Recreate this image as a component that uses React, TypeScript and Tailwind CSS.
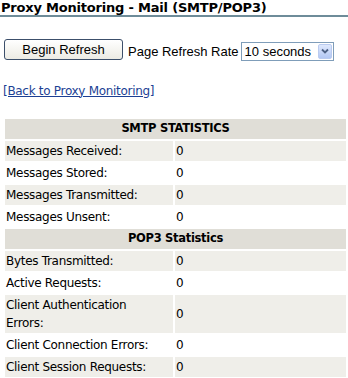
import React from 'react';

const smtpRows = [
  ['Messages Received:', '0'],
  ['Messages Stored:', '0'],
  ['Messages Transmitted:', '0'],
  ['Messages Unsent:', '0'],
];

const pop3Rows = [
  ['Bytes Transmitted:', '0'],
  ['Active Requests:', '0'],
  ['Client Authentication Errors:', '0'],
  ['Client Connection Errors:', '0'],
  ['Client Session Requests:', '0'],
];

function Section({ title, rows }: { title: string; rows: string[][] }) {
  return (
    <>
      <tr>
        <th colSpan={2} className="bg-[#e0ded7] h-[20px] p-0 text-center font-bold text-[11.5px] leading-[15px] tracking-[-0.3px] text-black">
          {title}
        </th>
      </tr>
      {rows.map(([label, value], i) => (
        <tr key={label} className={i % 2 === 0 ? 'bg-[#efeee9]' : 'bg-white'}>
          <td className="w-[168px] h-[20px] pl-[1px] pr-[8px] py-[1px] leading-[18px] align-middle">{label}</td>
          <td className="px-[1px] py-[1px] leading-[18px] align-middle">{value}</td>
        </tr>
      ))}
    </>
  );
}

export default function App() {
  return (
    <div className="w-[348px] h-[378px] bg-white overflow-hidden text-black" style={{ fontFamily: '"DejaVu Sans", Verdana, sans-serif' }}>
      <h1 className="font-bold text-[13px] leading-[15px] pl-[1px] border-b-2 border-[#6e8c99] tracking-[-0.2px]">
        Proxy Monitoring - Mail (SMTP/POP3)
      </h1>

      <div className="flex items-center mt-[21px] ml-[4px]" style={{ fontFamily: '"Liberation Sans", Arial, sans-serif' }}>
        <button className="w-[119px] h-[21px] rounded-[3px] border border-[#3c4f6b] bg-gradient-to-b from-white to-[#ecebe4] text-[13px] leading-none text-black">
          Begin Refresh
        </button>
        <span className="ml-[5px] text-[13px] mt-[4px]">Page Refresh Rate</span>
        <div className="ml-[2px] mt-[3px] w-[93px] h-[19px] border border-[#7f9db9] flex items-center justify-between pl-[3px] pr-[1px]">
          <span className="text-[13px] leading-none">10 seconds</span>
          <div className="w-[14px] h-[15px] rounded-[2px] border border-[#bacbf0] bg-gradient-to-b from-[#dfe8fd] to-[#b3c8f4] flex items-center justify-center">
            <svg width="8" height="6" viewBox="0 0 8 6">
              <path d="M1 1.5 L4 4.5 L7 1.5" stroke="#4d6185" strokeWidth="1.8" fill="none" />
            </svg>
          </div>
        </div>
      </div>

      <a href="#" className="block mt-[22px] ml-[3px] text-[12px] leading-[15px] tracking-[-0.3px] text-[#1c3f94] underline">
        [Back to Proxy Monitoring]
      </a>

      <table className="mt-[18px] ml-[3px] w-[345px] border-separate border-spacing-[2px] text-[12px] tracking-[-0.3px]">
        <tbody>
          <Section title="SMTP STATISTICS" rows={smtpRows} />
          <Section title="POP3 Statistics" rows={pop3Rows} />
        </tbody>
      </table>
    </div>
  );
}
